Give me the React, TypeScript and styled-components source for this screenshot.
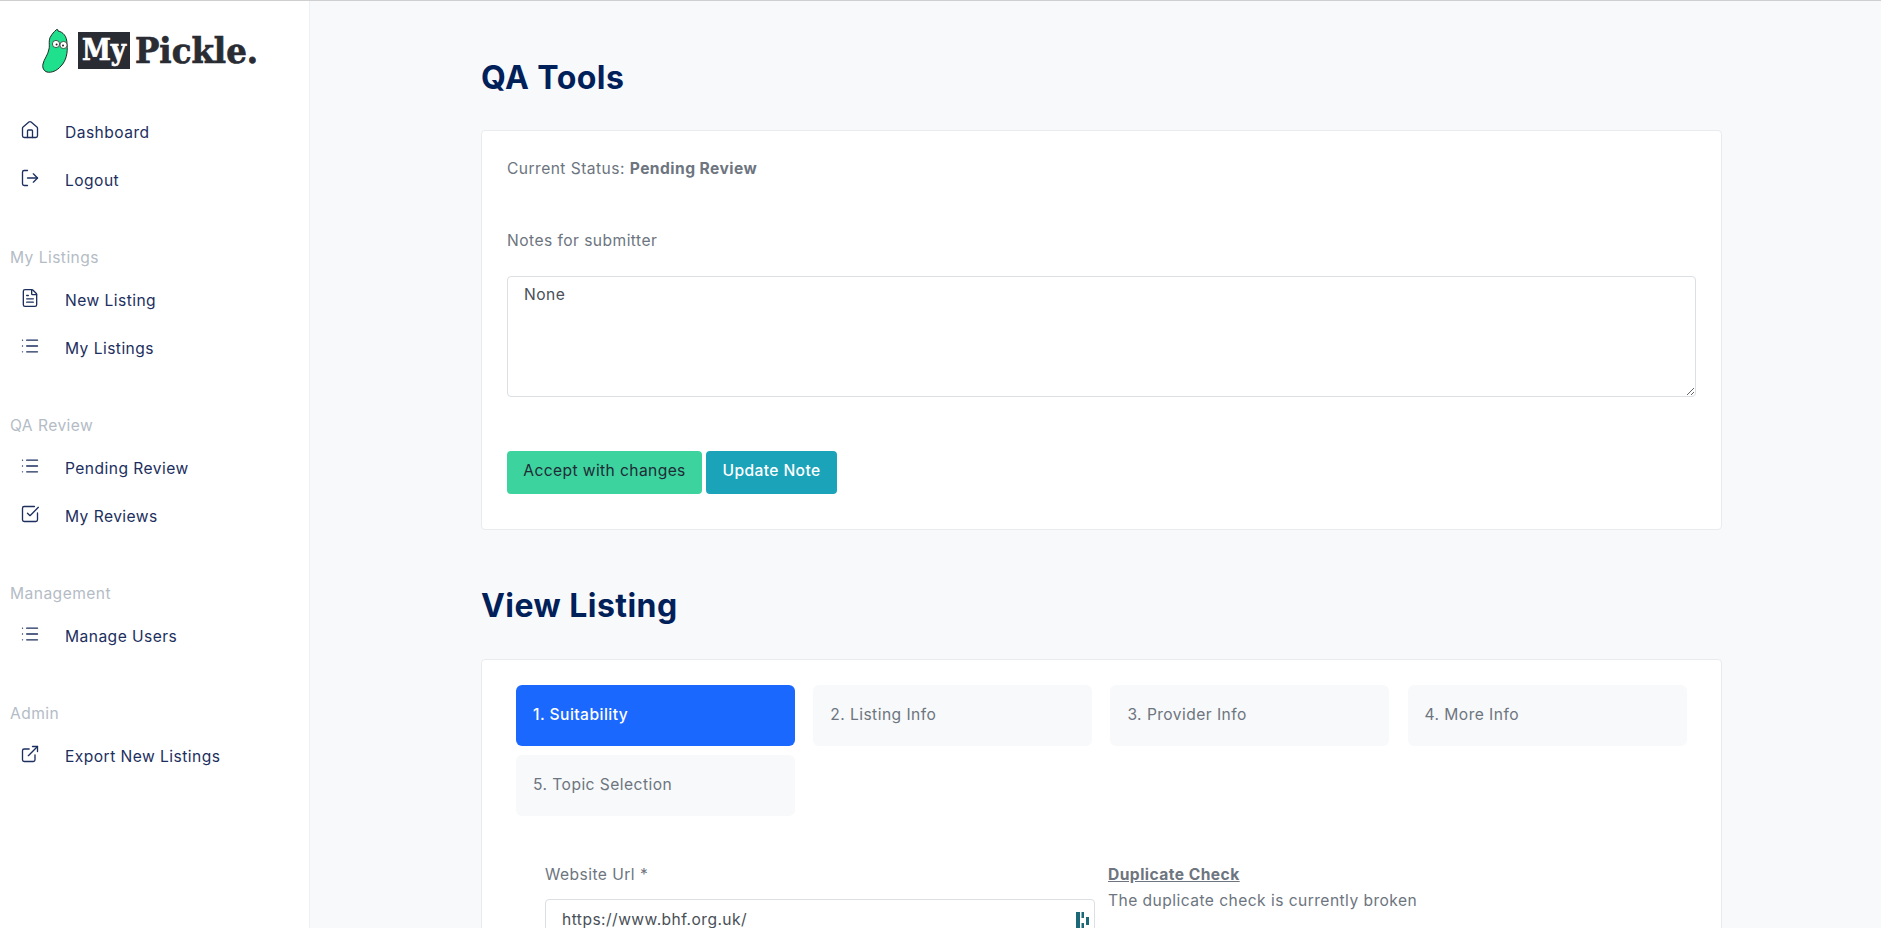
import styled, { createGlobalStyle } from 'styled-components';
import { House, LogOut, FileText, List, SquareCheckBig, ExternalLink, LucideIcon } from 'lucide-react';

const GlobalStyle = createGlobalStyle`
  html, body {
    margin: 0;
    height: 100%;
    overflow: hidden;
  }
  body {
    font-family: Inter, "Open Sans", "Liberation Sans", sans-serif;
    font-size: 15.6px;
    letter-spacing: .45px;
    color: #6d7580;
    background: #f8f9fb;
  }
  * {
    box-sizing: border-box;
  }
`;

const Page = styled.div`
  display: flex;
  height: 928px;
  overflow: hidden;
  border-top: 1px solid #cfcfcf;
`;

const Sidebar = styled.aside`
  flex: 0 0 310px;
  background: #fff;
  border-right: 1px solid #eef0f3;
`;

const LogoRow = styled.div`
  height: 107px;
  display: flex;
  align-items: flex-start;
  padding: 27px 0 0 42px;
  letter-spacing: 0;
`;

const LogoBox = styled.span`
  margin: 4px 5px 0 8px;
  width: 52px;
  height: 37px;
  background: #2a2c33;
  color: #fff;
  font: bold 29px/36px "DejaVu Serif Condensed", "DejaVu Serif", serif;
  text-align: center;
  -webkit-text-stroke: .6px #fff;
`;

const LogoWord = styled.span`
  margin-top: 2px;
  color: #2a2c33;
  font: bold 36px/40px "DejaVu Serif Condensed", "DejaVu Serif", serif;
  -webkit-text-stroke: .7px #2a2c33;
`;

const NavGroup = styled.nav`
  margin-bottom: 41px;
`;

const NavHeading = styled.div`
  height: 24px;
  margin-bottom: 7px;
  padding-left: 10px;
  color: #b4bcc6;
  line-height: 26px;
`;

const NavRow = styled.a`
  display: flex;
  align-items: center;
  height: 48px;
  padding-left: 20px;
  color: #1c2f5e;

  svg {
    flex: 0 0 20px;
    margin: -4px 25px 0 0;
  }
`;

const Main = styled.main`
  flex: 1;
  padding-left: 171px;
`;

const Column = styled.div`
  width: 1241px;
`;

const Title = styled.h1<{ $top: number }>`
  margin: ${({ $top }) => $top}px 0 0;
  height: 50px;
  color: #00205a;
  font-size: 32px;
  font-weight: 700;
  letter-spacing: .45px;
  line-height: 50px;
`;

const Card = styled.section<{ $top: number }>`
  margin-top: ${({ $top }) => $top}px;
  background: #fff;
  border: 1px solid #e9ecef;
  border-radius: 4px;
`;

const ToolsBody = styled.div`
  padding: 26px 25px 35px;
`;

const Line = styled.p`
  margin: 0;
  height: 24px;
  line-height: 24px;
`;

const StatusValue = styled.b`
  font-weight: 700;
`;

const NotesLabel = styled(Line)`
  margin-top: 48px;
`;

const NotesBox = styled.textarea`
  display: block;
  width: 100%;
  height: 121px;
  margin-top: 23px;
  padding: 8px 16px;
  background: #fff;
  border: 1px solid #dcdfe3;
  border-radius: 4px;
  color: #495057;
  font: inherit;
  letter-spacing: inherit;
  outline: none;
`;

const Actions = styled.div`
  display: flex;
  gap: 4px;
  margin-top: 54px;
`;

const Button = styled.button<{ $bg: string; $fg: string; $width: number; $weight: number }>`
  width: ${({ $width }) => $width}px;
  height: 43px;
  padding: 0 0 4px;
  background: ${({ $bg }) => $bg};
  border: 0;
  border-radius: 4px;
  color: ${({ $fg }) => $fg};
  font: inherit;
  font-weight: ${({ $weight }) => $weight};
  letter-spacing: .4px;
`;

const ListingBody = styled.div`
  padding: 25px 34px 0;
`;

const Tabs = styled.div`
  display: grid;
  grid-template-columns: repeat(4, 279px);
  column-gap: 18.2px;
  row-gap: 9px;
`;

const Tab = styled.div<{ $active?: boolean }>`
  height: 61px;
  padding: 18px 17px 0;
  background: ${({ $active }) => ($active ? '#1b68ff' : '#f8f9fa')};
  border-radius: 6px;
  color: ${({ $active }) => ($active ? '#fff' : '#6d7580')};
  line-height: 24px;
  font-weight: ${({ $active }) => ($active ? 500 : 400)};
`;

const FormRow = styled.div`
  display: flex;
  margin-top: 47px;
  padding-left: 29px;
`;

const UrlField = styled.div`
  position: relative;
  flex: 0 0 550px;
`;

const FieldLabel = styled.label`
  display: block;
  height: 24px;
  line-height: 24px;
`;

const UrlInput = styled.input`
  display: block;
  width: 100%;
  height: 46px;
  margin-top: 12px;
  padding: 0 16px 6px;
  background: #fff;
  border: 1px solid #dcdfe3;
  border-radius: 4px;
  color: #495057;
  font: inherit;
  letter-spacing: inherit;
  outline: none;
`;

const FieldBadge = styled.svg`
  position: absolute;
  top: 49px;
  right: 6px;
`;

const DuplicateNote = styled.div`
  margin-left: 13px;
`;

const DuplicateTitle = styled.div`
  height: 24px;
  font-weight: 700;
  line-height: 24px;
  text-decoration: underline;
`;

const DuplicateText = styled.div`
  height: 24px;
  margin-top: 2px;
  line-height: 24px;
`;

const navGroups: { heading?: string; items: [string, LucideIcon][] }[] = [
  { items: [['Dashboard', House], ['Logout', LogOut]] },
  { heading: 'My Listings', items: [['New Listing', FileText], ['My Listings', List]] },
  { heading: 'QA Review', items: [['Pending Review', List], ['My Reviews', SquareCheckBig]] },
  { heading: 'Management', items: [['Manage Users', List]] },
  { heading: 'Admin', items: [['Export New Listings', ExternalLink]] },
];

const tabs = ['1. Suitability', '2. Listing Info', '3. Provider Info', '4. More Info', '5. Topic Selection'];

const Pickle = () => (
  <svg width="28" height="46" viewBox="0 0 28 46">
    <path
      d="M14 2c1-1 2-1 2 1 5 1 9 5 9 13 1 9-1 17-6 22-4 5-10 7-14 6-3-1-5-4-4-8 1-5 5-9 6-15 1-4-1-9 2-13 1-2 3-4 5-6z"
      fill="#1fe08c"
      stroke="#1d2a26"
      strokeWidth="1"
    />
    <circle cx="14" cy="16" r="3.6" fill="#fff" stroke="#333" strokeWidth=".8" />
    <circle cx="21.5" cy="17" r="3.6" fill="#fff" stroke="#333" strokeWidth=".8" />
    <circle cx="14.6" cy="16.4" r="1" fill="#222" />
    <circle cx="21" cy="17.4" r="1" fill="#222" />
  </svg>
);

export default function App() {
  return (
    <Page>
      <GlobalStyle />
      <Sidebar>
        <LogoRow>
          <Pickle />
          <LogoBox>My</LogoBox>
          <LogoWord>Pickle.</LogoWord>
        </LogoRow>
        {navGroups.map((group, idx) => (
          <NavGroup key={idx}>
            {group.heading && <NavHeading>{group.heading}</NavHeading>}
            {group.items.map(([label, Icon]) => (
              <NavRow key={label}>
                <Icon size={20} strokeWidth={1.6} />
                {label}
              </NavRow>
            ))}
          </NavGroup>
        ))}
      </Sidebar>
      <Main>
        <Column>
          <Title $top={52}>QA Tools</Title>
          <Card $top={27}>
            <ToolsBody>
              <Line>
                Current Status: <StatusValue>Pending Review</StatusValue>
              </Line>
              <NotesLabel>Notes for submitter</NotesLabel>
              <NotesBox defaultValue="None" />
              <Actions>
                <Button $bg="#3cd39e" $fg="#212b36" $width={195} $weight={400}>Accept with changes</Button>
                <Button $bg="#1aa3b9" $fg="#fff" $width={131} $weight={500}>Update Note</Button>
              </Actions>
            </ToolsBody>
          </Card>
          <Title $top={51}>View Listing</Title>
          <Card $top={28}>
            <ListingBody>
              <Tabs>
                {tabs.map((tab, idx) => (
                  <Tab key={tab} $active={idx === 0}>{tab}</Tab>
                ))}
              </Tabs>
              <FormRow>
                <UrlField>
                  <FieldLabel>Website Url *</FieldLabel>
                  <UrlInput readOnly value="https://www.bhf.org.uk/" />
                  <FieldBadge width="13" height="18" viewBox="0 0 13 18" fill="#1a6878">
                    <rect x="0" y="0" width="4" height="18" />
                    <rect x="5.5" y="0" width="2.5" height="6" />
                    <rect x="5.5" y="11" width="2.5" height="7" />
                    <rect x="10" y="5" width="3" height="8" />
                  </FieldBadge>
                </UrlField>
                <DuplicateNote>
                  <DuplicateTitle>Duplicate Check</DuplicateTitle>
                  <DuplicateText>The duplicate check is currently broken</DuplicateText>
                </DuplicateNote>
              </FormRow>
            </ListingBody>
          </Card>
        </Column>
      </Main>
    </Page>
  );
}
